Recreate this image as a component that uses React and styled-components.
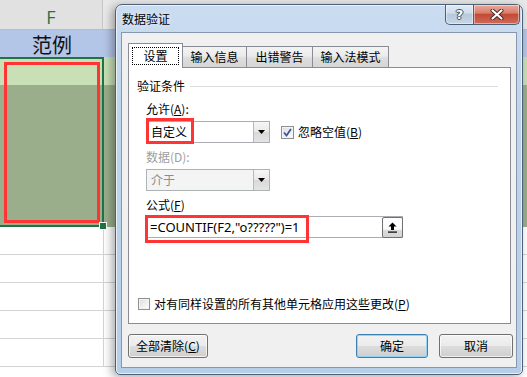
import React from 'react'
import styled, { createGlobalStyle } from 'styled-components'

const uiFont = `"Noto Sans CJK SC", "Noto Sans", sans-serif`
const excelGreen = '#217346'
const annotRed = '#ff3535'
const tabBorder = '#898c95'

const GlobalStyle = createGlobalStyle`
  html, body { margin: 0; padding: 0; background: #fff; }
  #root {
    position: relative;
    width: 527px;
    height: 377px;
    overflow: hidden;
    font-family: ${uiFont};
  }
`

// ---- spreadsheet behind the dialog ----

const Sheet = styled.div`
  display: flex;
  flex-direction: column;
  width: 100%;
`

const Row = styled.div`
  display: flex;
  flex: none;
  box-sizing: border-box;
  height: ${p => p.h}px;
  background: ${p => p.bg || '#fff'};
  border-bottom: ${p => (p.line ? `1px solid ${p.line}` : 'none')};
`

const HeadCell = styled.div`
  width: 103px;
  border-right: 1px solid #c6c6c6;
  background: #e1e1e1;
  color: ${excelGreen};
  font-family: "Open Sans", "Noto Sans", sans-serif;
  font-size: 18px;
  display: flex;
  justify-content: center;
  align-items: center;
  padding-top: 4px;
  box-sizing: border-box;
`

const TitleCell = styled.div`
  width: 104px;
  display: flex;
  justify-content: center;
  align-items: center;
  padding-top: 2px;
  font-size: 20px;
  color: #111;
  box-sizing: border-box;
`

const Band = styled.div`
  display: flex;
  flex: none;
  height: 170px;
  background: linear-gradient(#c9e0b6 0 28px, #9aae8c 28px);
`

const Selection = styled.div`
  position: relative;
  width: 104px;
  box-sizing: border-box;
  border: 2px solid ${excelGreen};
  border-left: none;
`

const Annotation = styled.div`
  position: absolute;
  box-sizing: border-box;
  border: 3px solid ${annotRed};
  left: ${p => p.x}px;
  top: ${p => p.y}px;
  width: ${p => p.w}px;
  height: ${p => p.h}px;
  pointer-events: none;
`

const FillHandle = styled.div`
  position: absolute;
  right: -5px;
  bottom: -5px;
  width: 6px;
  height: 6px;
  background: ${excelGreen};
  border: 1px solid #fff;
`

const GridCell = styled.div`
  width: 103px;
  border-right: 1px solid #d4d4d4;
`

// ---- dialog ----

const Dialog = styled.div`
  position: absolute;
  left: 115px;
  top: 4px;
  width: 408px;
  height: 371px;
  box-sizing: border-box;
  display: flex;
  flex-direction: column;
  padding: 0 5px 6px;
  border: 1px solid #4f5f76;
  border-radius: 7px 7px 5px 5px;
  background: linear-gradient(180deg, #cadcf0 0%, #bed4eb 30%, #b7cee8 100%);
  box-shadow: inset 0 0 0 1px rgba(255, 255, 255, 0.65), -3px 2px 10px rgba(0, 0, 0, 0.35);
`

const TitleBar = styled.div`
  display: flex;
  flex: none;
  height: 27px;
`

const Title = styled.div`
  align-self: center;
  margin-left: 1px;
  font-size: 12px;
  line-height: 16px;
  color: #000;
  text-shadow: 0 0 6px rgba(255, 255, 255, 0.9);
`

const CaptionButtons = styled.div`
  display: flex;
  margin-left: auto;
  margin-right: -3px;
  height: 20px;
`

const CaptionButton = styled.div`
  box-sizing: border-box;
  width: ${p => p.w}px;
  height: 20px;
  display: flex;
  justify-content: center;
  align-items: center;
  border: 1px solid #4d5f77;
  border-top: none;
  border-left: ${p => (p.close ? 'none' : '1px solid #4d5f77')};
  border-radius: ${p => (p.close ? '0 0 5px 0' : '0 0 0 5px')};
  background: ${p =>
    p.close
      ? 'linear-gradient(180deg, #e9a99a 0%, #d97e6c 42%, #c44a35 50%, #cf6b58 100%)'
      : 'linear-gradient(180deg, #e2ebf5 0%, #cfdcea 42%, #b8c9dc 50%, #c8d6e6 100%)'};
  box-shadow: inset 0 0 0 1px rgba(255, 255, 255, 0.45);
`

const HelpGlyph = styled.span`
  font-family: "DejaVu Sans", sans-serif;
  font-weight: bold;
  font-size: 13px;
  line-height: 1;
  color: #fff;
  text-shadow: 0 0 1px #2c3440, 1px 0 0 #4a5564, -1px 0 0 #4a5564, 0 1px 0 #4a5564, 0 -1px 0 #4a5564;
`

const Client = styled.div`
  flex: 1;
  display: flex;
  flex-direction: column;
  box-sizing: border-box;
  background: #f0f0f0;
  border: 1px solid #8897ad;
  padding: 10px 3px 9px 6px;
  font-size: 12px;
  color: #000;
`

const TabStrip = styled.div`
  display: flex;
  align-items: flex-end;
  flex: none;
  height: 24px;
  position: relative;
  z-index: 1;
`

const Tab = styled.div`
  box-sizing: border-box;
  width: ${p => p.w}px;
  height: ${p => (p.active ? 25 : 21)}px;
  margin-bottom: ${p => (p.active ? -1 : 0)}px;
  margin-left: ${p => (p.first ? 0 : -1)}px;
  border: 1px solid ${tabBorder};
  border-bottom: none;
  background: ${p => (p.active ? '#fff' : 'linear-gradient(180deg, #f3f3f3 0%, #ebebeb 45%, #dddddd 55%, #d6d6d6 100%)')};
  display: flex;
  justify-content: center;
  align-items: center;
  padding-bottom: ${p => (p.active ? 1 : 0)}px;
  line-height: 16px;
  white-space: nowrap;
`

const FocusRect = styled.span`
  border: 1px dotted #000;
  padding: 0 10px;
  line-height: 16px;
`

const Panel = styled.div`
  box-sizing: border-box;
  flex: none;
  height: 257px;
  margin-right: 2px;
  background: #fff;
  border: 1px solid ${tabBorder};
  display: flex;
  flex-direction: column;
  padding: 10px 0 11px 8px;
`

const GroupHeader = styled.div`
  display: flex;
  align-items: center;
  height: 16px;
  line-height: 16px;
`

const GroupLine = styled.div`
  flex: 1;
  height: 1px;
  margin: 1px 12px 0 5px;
  background: #dcdcdc;
`

const Fields = styled.div`
  display: flex;
  flex-direction: column;
  padding-left: 9px;
`

const FieldLabel = styled.div`
  line-height: 16px;
  margin-top: ${p => p.mt}px;
  color: ${p => (p.disabled ? '#a0a0a0' : '#000')};
`

const FieldRow = styled.div`
  display: flex;
  align-items: center;
  margin-top: ${p => p.mt}px;
`

const Combo = styled.div`
  position: relative;
  box-sizing: border-box;
  width: 124px;
  height: 22px;
  display: flex;
  align-items: center;
  border: 1px solid ${p => (p.disabled ? '#adb2b5' : '#abadb3')};
  background: ${p => (p.disabled ? '#f4f4f4' : '#fff')};
  color: ${p => (p.disabled ? '#8d8d8d' : '#000')};
  padding-left: 4px;
`

const ComboText = styled.span`
  flex: 1;
  line-height: 16px;
`

const DropButton = styled.div`
  box-sizing: border-box;
  width: 16px;
  height: 20px;
  display: flex;
  justify-content: center;
  align-items: center;
  border-left: 1px solid #b8b8b8;
  background: linear-gradient(180deg, #f6f6f6 0%, #e9e9e9 50%, #d9d9d9 51%, #e4e4e4 100%);
`

const CheckBox = styled.div`
  box-sizing: border-box;
  width: ${p => p.size}px;
  height: ${p => p.size}px;
  flex: none;
  border: 1px solid #8e8f8f;
  background: linear-gradient(135deg, #dcdcdc 0%, #f4f4f4 70%, #fff 100%);
  box-shadow: inset 0 0 0 1px #f4f4f4;
  display: flex;
  justify-content: center;
  align-items: center;
`

const CheckLabel = styled.span`
  margin-left: ${p => p.gap}px;
  line-height: 16px;
  white-space: nowrap;
`

const FormulaBox = styled.div`
  position: relative;
  box-sizing: border-box;
  width: 257px;
  height: 22px;
  display: flex;
  align-items: center;
  border: 1px solid #abadb3;
  background: #fff;
  padding-left: 3px;
`

const FormulaText = styled.span`
  flex: 1;
  font-family: "Noto Sans", sans-serif;
  font-size: 13px;
  line-height: 18px;
  white-space: nowrap;
`

const CollapseButton = styled.div`
  box-sizing: border-box;
  width: 21px;
  height: 21px;
  margin-right: -1px;
  margin-top: 1px;
  display: flex;
  justify-content: center;
  align-items: center;
  border: 1px solid #707070;
  border-radius: 2px;
  background: linear-gradient(180deg, #fff 0%, #fafafa 60%, #dcdcdc 62%, #d4d4d4 100%);
`

const BottomCheck = styled.div`
  display: flex;
  align-items: center;
  margin-top: auto;
  margin-left: 1px;
`

const ButtonRow = styled.div`
  display: flex;
  flex: none;
  margin-top: 10px;
  height: 24px;
`

const Button = styled.div`
  box-sizing: border-box;
  width: ${p => p.w}px;
  height: 24px;
  margin-left: ${p => p.ml || 0}px;
  display: flex;
  justify-content: center;
  align-items: center;
  border: 1px solid ${p => (p.primary ? '#3c7fb1' : '#707070')};
  border-radius: 3px;
  background: linear-gradient(180deg, #f2f2f2 0%, #ebebeb 48%, #dddddd 50%, #cfcfcf 100%);
  box-shadow: inset 0 0 0 1px ${p => (p.primary ? 'rgba(140, 210, 245, 0.9)' : 'rgba(255, 255, 255, 0.7)')};
  line-height: 16px;
`

const Spacer = styled.div`
  flex: 1;
`

const Arrow = () => (
  <svg width="7" height="4" viewBox="0 0 7 4">
    <path d="M0 0h7L3.5 4z" fill="#000" />
  </svg>
)

const App = () => {
  return (
    <>
      <GlobalStyle />
      <Sheet>
        <Row h={30} bg="#e8e8e8" line="#bdbdbd">
          <HeadCell>F</HeadCell>
        </Row>
        <Row h={27} bg="#b4c6e7">
          <TitleCell>范例</TitleCell>
        </Row>
        <Band>
          <Selection>
            <Annotation x={4} y={3} w={96} h={161} />
            <FillHandle />
          </Selection>
        </Band>
        {[0, 1, 2, 3, 4].map(i => (
          <Row key={i} h={28} line="#d4d4d4">
            <GridCell />
          </Row>
        ))}
      </Sheet>

      <Dialog>
        <TitleBar>
          <Title>数据验证</Title>
          <CaptionButtons>
            <CaptionButton w={29}>
              <HelpGlyph>?</HelpGlyph>
            </CaptionButton>
            <CaptionButton w={46} close>
              <svg width="14" height="11" viewBox="0 0 14 11">
                <path d="M2.5 1.5L11.5 9.5M11.5 1.5L2.5 9.5" stroke="#3a2a28" strokeWidth="4" strokeLinecap="round" />
                <path d="M2.5 1.5L11.5 9.5M11.5 1.5L2.5 9.5" stroke="#fff" strokeWidth="2.2" strokeLinecap="round" />
              </svg>
            </CaptionButton>
          </CaptionButtons>
        </TitleBar>

        <Client>
          <TabStrip>
            <Tab w={55} active first>
              <FocusRect>设置</FocusRect>
            </Tab>
            <Tab w={65}>输入信息</Tab>
            <Tab w={67}>出错警告</Tab>
            <Tab w={77}>输入法模式</Tab>
          </TabStrip>

          <Panel>
            <GroupHeader>
              验证条件
              <GroupLine />
            </GroupHeader>
            <Fields>
              <FieldLabel mt={7}>
                允许(<u>A</u>):
              </FieldLabel>
              <FieldRow mt={4}>
                <Combo>
                  <ComboText>自定义</ComboText>
                  <DropButton>
                    <Arrow />
                  </DropButton>
                  <Annotation x={-1} y={-4} w={48} h={26} />
                </Combo>
                <CheckBox size={13} style={{ marginLeft: 11 }}>
                  <svg width="9" height="9" viewBox="0 0 9 9">
                    <path d="M1 4.5L3.5 7.5L8 1" stroke="#3b57a0" strokeWidth="1.8" fill="none" />
                  </svg>
                </CheckBox>
                <CheckLabel gap={4}>
                  忽略空值(<u>B</u>)
                </CheckLabel>
              </FieldRow>
              <FieldLabel mt={6} disabled>
                数据(D):
              </FieldLabel>
              <FieldRow mt={4}>
                <Combo disabled>
                  <ComboText>介于</ComboText>
                  <DropButton>
                    <Arrow />
                  </DropButton>
                </Combo>
              </FieldRow>
              <FieldLabel mt={6}>
                公式(<u>F</u>)
              </FieldLabel>
              <FieldRow mt={3}>
                <FormulaBox>
                  <FormulaText>=COUNTIF(F2,"o?????")=1</FormulaText>
                  <CollapseButton>
                    <svg width="11" height="11" viewBox="0 0 11 11">
                      <path d="M5.5 0.5L1.5 4.5H4V8H7V4.5H9.5Z" fill="#000" />
                      <rect x="1" y="9.5" width="9" height="1.2" fill="#000" />
                    </svg>
                  </CollapseButton>
                  <Annotation x={-2} y={-2} w={164} h={28} />
                </FormulaBox>
              </FieldRow>
            </Fields>
            <BottomCheck>
              <CheckBox size={12} />
              <CheckLabel gap={4}>
                对有同样设置的所有其他单元格应用这些更改(<u>P</u>)
              </CheckLabel>
            </BottomCheck>
          </Panel>

          <ButtonRow>
            <Button w={80}>
              全部清除(<u>C</u>)
            </Button>
            <Spacer />
            <Button w={72} primary>
              确定
            </Button>
            <Button w={74} ml={11}>
              取消
            </Button>
          </ButtonRow>
        </Client>
      </Dialog>
    </>
  )
}

export default App
